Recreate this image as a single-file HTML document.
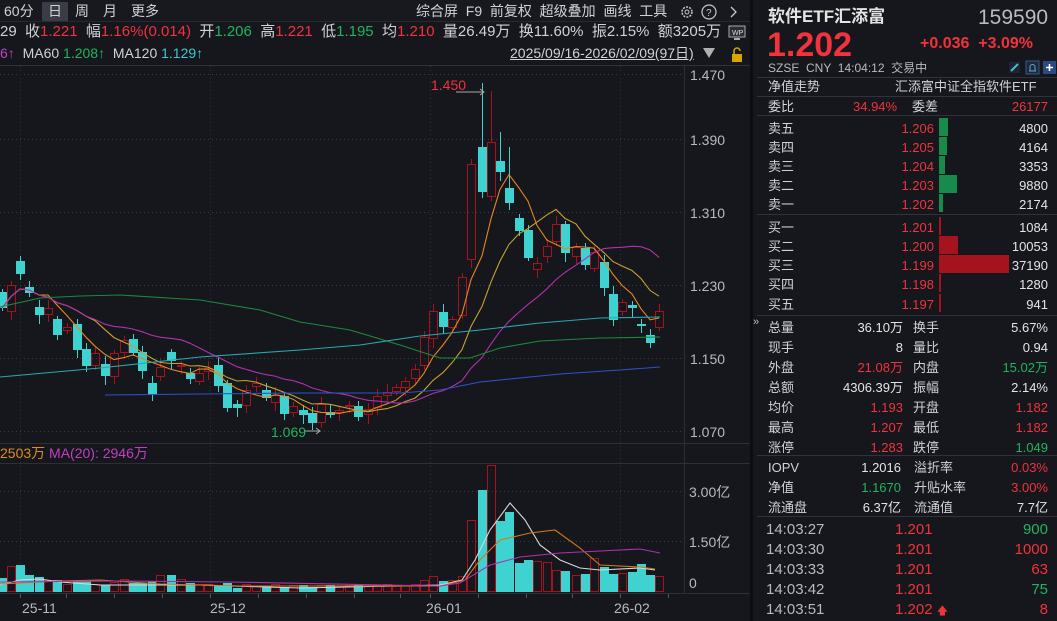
<!DOCTYPE html>
<html><head><meta charset="utf-8">
<style>
*{margin:0;padding:0;box-sizing:border-box}
body{width:1057px;height:621px;background:#15171c;overflow:hidden;position:relative;font-family:"Liberation Sans","Noto Sans CJK SC",sans-serif;color:#d0d2d6;font-size:13px}
.a{position:absolute;white-space:nowrap;line-height:1}
.r{color:#f2323c}.g{color:#20b45c}.w{color:#e4e4e4}.gr{color:#b8bac0}
.rt{text-align:right}
.hl{position:absolute;height:1px;background:#30333b}
</style></head><body>
<!-- toolbar -->
<div style="position:absolute;left:0;top:0;width:750px;height:22px;background:#17191e;border-bottom:1px solid #26292f"></div>
<div style="position:absolute;left:42px;top:2px;width:26px;height:19px;background:#3a3d45"></div>
<div class="a" style="left:4px;top:4px;font-size:14px">60分</div>
<div class="a" style="left:48px;top:4px;font-size:14px">日</div>
<div class="a" style="left:75px;top:4px;font-size:14px">周</div>
<div class="a" style="left:103px;top:4px;font-size:14px">月</div>
<div class="a" style="left:131px;top:4px;font-size:14px">更多</div>
<div class="a" style="left:416px;top:4px;font-size:14px">综合屏 &nbsp;F9 &nbsp;前复权 &nbsp;超级叠加 &nbsp;画线 &nbsp;工具</div>
<svg style="position:absolute;left:676px;top:3px" width="70" height="18"><circle cx="11" cy="9" r="5" fill="none" stroke="#c8c8c8" stroke-width="1.5" stroke-dasharray="2 1.2"/><circle cx="11" cy="9" r="2" fill="none" stroke="#c8c8c8"/><circle cx="33" cy="9" r="7" fill="none" stroke="#c8c8c8" stroke-width="1.2"/><text x="30" y="13" fill="#c8c8c8" font-size="10" font-family="Liberation Sans">?</text><path d="M55 4 L60 9 L55 14" fill="none" stroke="#c8c8c8" stroke-width="1.3"/></svg>
<!-- info row -->
<div class="a" style="left:0;top:24px;font-size:15px">29 &nbsp;收<span class="r">1.221</span> &nbsp;幅<span class="r">1.16%(0.014)</span> &nbsp;开<span class="g">1.206</span> &nbsp;高<span class="r">1.221</span> &nbsp;低<span class="g">1.195</span> &nbsp;均<span class="r">1.210</span> &nbsp;量26.49万 &nbsp;换11.60% &nbsp;振2.15% &nbsp;额3205万</div>
<svg style="position:absolute;left:728px;top:25px" width="18" height="16"><rect x="1" y="1" width="16" height="11" fill="#2a2d33" stroke="#aaa"/><text x="4" y="10" font-size="7" fill="#ddd" font-family="Liberation Sans">WP</text><rect x="6" y="13" width="6" height="2" fill="#aaa"/></svg>
<div class="a" style="left:0;top:46px;font-size:14px"><span style="color:#c040c0">6↑</span> &nbsp;MA60 <span class="g">1.208↑</span> &nbsp;MA120 <span style="color:#3ac8d0">1.129↑</span></div>
<div class="a" style="left:510px;top:46px;font-size:14px;text-decoration:underline">2025/09/16-2026/02/09(97日)</div>
<svg style="position:absolute;left:703px;top:46px" width="45" height="18"><path d="M0 2 L12 2 L6 12Z" fill="#b0b0b0"/><rect x="29" y="8" width="10" height="8" fill="#d8a400"/><path d="M31 8 V5 a3 3 0 0 1 6 0" fill="none" stroke="#d8a400" stroke-width="1.5"/></svg>
<div class="hl" style="left:0;top:65px;width:750px"></div>
<!-- chart -->
<svg id="ch" style="position:absolute;left:0;top:0" width="750" height="621"></svg>
<div style="position:absolute;left:750px;top:0;width:3px;height:621px;background:#0c0d10"></div>
<!-- price axis labels -->
<div class="a gr" style="left:690px;top:68px;font-size:14px">1.470</div>
<div class="a gr" style="left:690px;top:133px;font-size:14px">1.390</div>
<div class="a gr" style="left:690px;top:206px;font-size:14px">1.310</div>
<div class="a gr" style="left:690px;top:279px;font-size:14px">1.230</div>
<div class="a gr" style="left:690px;top:352px;font-size:14px">1.150</div>
<div class="a gr" style="left:690px;top:425px;font-size:14px">1.070</div>
<div class="a r" style="left:431px;top:78px;font-size:14px">1.450</div>
<div class="a g" style="left:271px;top:425px;font-size:14px">1.069</div>
<div class="a" style="left:0;top:446px;font-size:14px"><span style="color:#e08a20">2503万</span> <span style="color:#c040c0">MA(20): 2946万</span></div>
<div class="a gr" style="left:689px;top:485px;font-size:14px">3.00亿</div>
<div class="a gr" style="left:689px;top:535px;font-size:14px">1.50亿</div>
<div class="a gr" style="left:689px;top:576px;font-size:14px">0</div>
<div class="a gr" style="left:22px;top:601px;font-size:14px">25-11</div>
<div class="a gr" style="left:210px;top:601px;font-size:14px">25-12</div>
<div class="a gr" style="left:426px;top:601px;font-size:14px">26-01</div>
<div class="a gr" style="left:614px;top:601px;font-size:14px">26-02</div>
<div class="a gr" style="left:753px;top:317px;font-size:11px">»</div>
<!-- right panel -->
<div class="a w" style="left:768px;top:8px;font-size:17px;font-weight:bold">软件ETF汇添富</div>
<div class="a gr" style="left:978px;top:7px;font-size:21px">159590</div>
<div class="a r" style="left:767px;top:28px;font-size:34px;font-weight:bold">1.202</div>
<div class="a r" style="left:920px;top:36px;font-size:16px;font-weight:bold">+0.036 &nbsp;+3.09%</div>
<div class="a gr" style="left:768px;top:62px;font-size:12px">SZSE &nbsp;CNY &nbsp;14:04:12 &nbsp;交易中</div>
<svg style="position:absolute;left:1007px;top:60px" width="50" height="16"><rect x="2" y="2" width="11" height="11" fill="#223"/><path d="M4 11 L11 4" stroke="#3ac8d0" stroke-width="2"/><rect x="19" y="1" width="13" height="13" fill="#1c2a40" stroke="#3a5a80"/><path d="M22 11 h7 M23 11 v-4 a2.5 2.5 0 0 1 5 0 v4" fill="none" stroke="#6ab" /><rect x="36" y="1" width="13" height="13" fill="#2a4a80"/><path d="M42.5 4 v7 M39 7.5 h7" stroke="#fff" stroke-width="1.6"/></svg>
<div class="hl" style="left:757px;top:77px;width:300px"></div>
<div class="a" style="left:768px;top:80px">净值走势</div>
<div class="a" style="left:895px;top:80px">汇添富中证全指软件ETF</div>
<div class="hl" style="left:757px;top:96px;width:300px"></div>
<div class="a" style="left:768px;top:100px">委比</div><div class="a r" style="left:853px;top:100px">34.94%</div><div class="a" style="left:912px;top:100px">委差</div><div class="a r rt" style="left:990px;top:100px;width:58px">26177</div>
<div class="hl" style="left:757px;top:115px;width:300px"></div>
<div id="book"></div>
<div class="hl" style="left:757px;top:214px;width:300px"></div>
<div class="hl" style="left:757px;top:315px;width:300px"></div>
<div class="hl" style="left:757px;top:455px;width:300px"></div>
<div class="hl" style="left:757px;top:516px;width:300px"></div>
<script>
var H='';
function t(x,y,s,c,w,al,fs){H+='<div class="a '+(c||'')+'" style="left:'+x+'px;top:'+y+'px;'+(w?'width:'+w+'px;':'')+(al?'text-align:right;':'')+(fs?'font-size:'+fs+'px;':'')+'">'+s+'</div>';}
var bk=[['卖五','1.206','4800',9,1],['卖四','1.205','4164',8,1],['卖三','1.204','3353',6,1],['卖二','1.203','9880',18,1],['卖一','1.202','2174',4,1],['买一','1.201','1084',2,0],['买二','1.200','10053',19,0],['买三','1.199','37190',70,0],['买四','1.198','1280',2,0],['买五','1.197','941',2,0]];
var ys=[122,141,160,179,198,221,240,259,278,298];
bk.forEach(function(b,i){var y=ys[i];t(768,y,b[0]);t(880,y,b[1],'r',54,1);
H+='<div style="position:absolute;left:939px;top:'+(y-4)+'px;width:'+b[3]+'px;height:18px;background:'+(b[4]?'#178a4c':'#a5141e')+'"></div>';
t(990,y,b[2],'w',58,1);});
var st=[['总量','36.10万','w','换手','5.67%','w'],['现手','8','w','量比','0.94','w'],['外盘','21.08万','r','内盘','15.02万','g'],['总额','4306.39万','w','振幅','2.14%','w'],['均价','1.193','r','开盘','1.182','r'],['最高','1.207','r','最低','1.182','r'],['涨停','1.283','r','跌停','1.049','g']];
st.forEach(function(s,i){var y=321+i*20;t(768,y,s[0]);t(820,y,s[1],s[2],83,1);t(913,y,s[3]);t(980,y,s[4],s[5],68,1);});
var st2=[['IOPV','1.2016','w','溢折率','0.03%','r'],['净值','1.1670','g','升贴水率','3.00%','r'],['流通盘','6.37亿','w','流通值','7.7亿','w']];
st2.forEach(function(s,i){var y=461+i*20;t(768,y,s[0]);t(820,y,s[1],s[2],81,1);t(914,y,s[3]);t(980,y,s[4],s[5],68,1);});
var tr=[['14:03:27','1.201','900','g'],['14:03:30','1.201','1000','r'],['14:03:33','1.201','63','r'],['14:03:42','1.201','75','g'],['14:03:51','1.202 <span style="font-size:11px">🡅</span>','8','r']];
tr.forEach(function(s,i){var y=522+i*20;t(766,y,s[0],'gr',0,0,15);t(895,y,s[1],'r',0,0,15);t(990,y,s[2],s[3],58,1,15);});
document.getElementById('book').outerHTML=H;H='';
var S='';
function L(x1,y1,x2,y2,c,d){S+='<line x1="'+x1+'" y1="'+y1+'" x2="'+x2+'" y2="'+y2+'" stroke="'+c+'" '+(d?'stroke-dasharray="1 3"':'')+'/>';}
[74,139,212,285,358,431].forEach(function(y){L(0,y+.5,684,y+.5,'#3a3d45',1)});
[491,541].forEach(function(y){L(0,y+.5,684,y+.5,'#3a3d45',1)});
[20,210,430,620].forEach(function(x){L(x+.5,66,x+.5,593,'#2e3138',1)});
L(684.5,66,684.5,593,'#2c2f36');L(0,443.5,750,443.5,'#2c2f36');L(0,463.5,750,463.5,'#2c2f36');L(0,593.5,750,593.5,'#2c2f36');
[20,66,114,162,210,258,306,354,400,430,478,526,572,620,668].forEach(function(x){L(x+.5,594,x+.5,598,'#555')});
var C=[[2,292,308,0],[11,285,312,1],[20,261,274,0],[29,287,293,0],[39,307,315,0],[48,308,315,1],[57,319,335,0],[67,327,331,1],[77,324,350,0],[86,349,366,0],[95,353,366,1],[105,364,376,0],[114,353,377,1],[124,340,353,1],[133,339,353,0],[142,352,371,0],[152,383,395,0],[160,367,377,1],[171,352,361,0],[181,365,367,1],[190,373,379,0],[199,373,382,1],[208,368,372,1],[218,365,386,0],[227,383,408,0],[237,404,408,0],[246,390,406,1],[256,383,387,1],[266,390,398,0],[275,395,403,1],[284,396,414,0],[293,406,413,1],[303,410,415,0],[312,413,423,0],[321,404,423,1],[330,412,415,0],[339,410,413,1],[349,405,407,1],[358,406,417,0],[368,409,415,1],[377,396,408,1],[387,392,396,1],[396,387,392,1],[405,381,388,1],[415,369,379,1],[424,337,366,1],[433,311,339,1],[443,312,327,0],[452,319,328,1],[462,277,316,1],[471,164,260,1],[482,147,192,0,83],[491,142,197,1,91],[500,161,172,0,132],[509,188,203,0,147],[519,218,231,0],[528,230,258,0],[537,263,270,1],[547,246,257,1],[556,224,242,1],[565,224,253,0],[576,247,257,1],[585,248,265,0],[594,252,269,1],[604,262,288,0],[613,294,320,0],[622,302,312,1],[632,305,308,0],[641,324,326,0],[650,335,343,0],[659,311,328,1]];
var cl=[];
C.forEach(function(c,i){var x=c[0],red=c[3],col=red?'#a8121c':'#3ed2d0';var hi=c[4]||c[1]-3-(i*7%6),lo=c[2]+3+(i*5%7);
L(x+.5,hi,x+.5,c[1],col);L(x+.5,c[2],x+.5,lo,col);
if(red)S+='<rect x="'+(x-3.5)+'" y="'+(c[1]+.5)+'" width="8" height="'+Math.max(1,c[2]-c[1]-1)+'" fill="none" stroke="'+col+'"/>';
else S+='<rect x="'+(x-4)+'" y="'+c[1]+'" width="9" height="'+Math.max(2,c[2]-c[1])+'" fill="'+col+'"/>';
cl.push(red?c[1]:c[2]);});
function ma(n,col){var p=[];for(var i=0;i<cl.length;i++){var s=0,k=0;for(var j=Math.max(0,i-n+1);j<=i;j++){s+=cl[j];k++;}p.push(C[i][0]+','+(s/k).toFixed(1));}S+='<polyline points="'+p.join(' ')+'" fill="none" stroke="'+col+'" stroke-width="1.1"/>';}
ma(5,'#e8861c');ma(10,'#c8a030');ma(20,'#b030b0');
function P(pts,col){S+='<polyline points="'+pts+'" fill="none" stroke="'+col+'" stroke-width="1.1"/>';}
P('0,307 40,298 80,296 120,295 200,300 260,310 300,322 350,330 400,345 440,358 470,358 500,348 540,341 600,338 660,337','#1c8a3c');
P('0,377 100,368 200,357 300,350 360,345 420,336 480,330 540,323 600,318 660,317','#2aa8b0');
P('105,395 200,394 300,393 400,393 440,390 480,382 560,374 620,370 660,367','#3050c8');
var V=[[2,14],[12,25],[21,27],[30,17],[39,15],[49,11],[57,12],[67,7],[78,11],[86,11],[96,7],[105,7],[115,9],[124,12],[133,9],[143,9],[152,11],[162,16],[171,17],[181,12],[190,9],[200,7],[210,7],[219,6],[229,9],[237,4],[421,11],[433,15],[443,11],[452,11],[462,15],[471,71],[481,102],[490,126],[500,71],[510,80],[519,29],[529,32],[538,30],[548,29],[557,21],[567,21],[577,16],[586,18],[596,33],[605,25],[615,18],[624,18],[634,20],[641,28],[651,17],[660,15]];
C.forEach(function(c,i){var x=c[0],red=c[3],h=5+(i%3);V.forEach(function(v){if(Math.abs(v[0]-x)<5)h=v[1];});
var col=red?'#a8121c':'#3ed2d0';
if(red)S+='<rect x="'+(x-3.5)+'" y="'+(591.5-h)+'" width="8" height="'+h+'" fill="none" stroke="'+col+'"/>';else S+='<rect x="'+(x-4)+'" y="'+(592-h)+'" width="9" height="'+h+'" fill="'+col+'"/>';});
P('0,585 20,580 40,579 60,582 100,585 200,585 300,588 440,585 462,580 475,560 490,530 510,503 525,520 540,545 560,560 580,568 600,570 640,568 655,570','#d8d8d8');
P('0,584 60,581 100,580 160,584 240,586 440,586 465,580 480,560 500,540 530,533 555,530 580,548 600,565 640,567 655,569','#d07818');
P('0,582 120,581 230,582 440,586 460,583 490,565 520,557 560,553 600,551 640,549 660,553','#b030b0');
S+='<path d="M456 92 H484 M480 89 L484 92 L480 95" stroke="#aaa" fill="none"/><path d="M305 431 H320 M316 428 L320 431 L316 434" stroke="#aaa" fill="none"/>';
document.getElementById('ch').innerHTML=S;
</script>
</body></html>
